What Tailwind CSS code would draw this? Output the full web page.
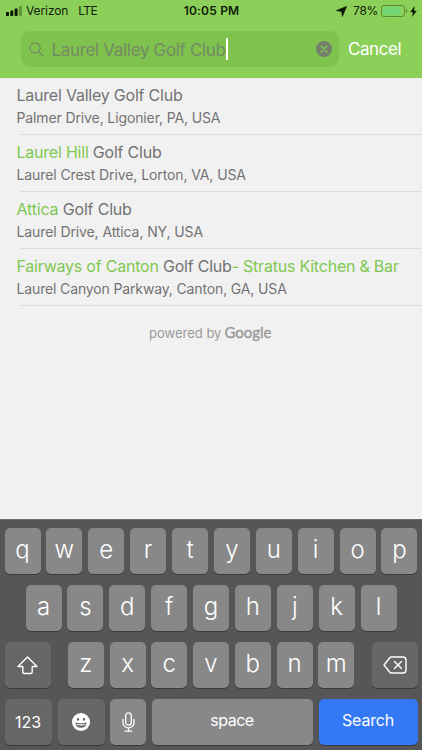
<!DOCTYPE html>
<html lang="en">
<head>
<meta charset="utf-8">
<title>Course search</title>
<script src="https://cdn.jsdelivr.net/npm/@tailwindcss/browser@4"></script>
</head>
<body class="w-[422px] h-[750px] overflow-hidden bg-[#f1f1f1] font-['Inter',sans-serif] flex flex-col whitespace-nowrap">
<header class="h-[78px] shrink-0 bg-[#8ccf59]">
  <div class="h-[22px] grid grid-cols-[1fr_auto_1fr] items-center text-[12px] leading-[22px] text-[#10200a] pl-[6px] pr-[5px]">
    <div class="flex items-center">
      <svg class="w-[17px] h-[10px] mr-[3px]" viewBox="0 0 17 10"><rect x="0" y="6" width="3" height="4" rx=".8" fill="#0b1605"/><rect x="4.3" y="4.6" width="3" height="5.4" rx=".8" fill="#0b1605"/><rect x="8.6" y="2.6" width="3" height="7.4" rx=".8" fill="#0b1605"/><rect x="12.9" y="0" width="3" height="10" rx=".8" fill="#5f9238"/></svg>
      <span class="tracking-[-0.1px]">Verizon</span><span class="ml-[10px] tracking-[-0.6px]">LTE</span>
    </div>
    <div class="font-semibold tracking-[0.2px]">10:05 PM</div>
    <div class="flex items-center justify-end">
      <svg class="w-[11px] h-[11px] mr-[6px]" viewBox="0 0 10 10"><path d="M9.700.3 5.800 9.600 5 5 .3 4.200Z" fill="#0b1605" stroke="#0b1605" stroke-width=".5" stroke-linejoin="round"/></svg>
      <span class="tracking-[-0.3px] mr-[3px]">78%</span>
      <svg class="w-[27px] h-[12px] mr-[2px]" viewBox="0 0 27 12"><rect x=".5" y=".5" width="23" height="11" rx="2.6" fill="none" stroke="#5b8a3a"/><rect x="2" y="2" width="18" height="8" rx="1.2" fill="#72d877"/><path d="M25 4v4q1.4-.6 1.4-2T25 4Z" fill="#5b8a3a"/></svg>
      <svg class="w-[7px] h-[11px]" viewBox="0 0 7 11"><path d="M4.6 0 .2 6.2h2.7L2.2 11l4.6-6.3H4Z" fill="#0b1605"/></svg>
    </div>
  </div>
  <div class="flex items-center pl-[21px] pt-[9px]">
    <div class="w-[318px] h-[36px] rounded-[9px] bg-[#7fc24e] flex items-center pl-[8px] pr-[7px] text-[#748a64]">
      <svg class="w-[15px] h-[15px] mr-[7.5px]" viewBox="0 0 15 15" fill="none" stroke="#728b60" stroke-width="1.3" stroke-linecap="round"><circle cx="6" cy="6" r="5.1"/><path d="m9.8 9.8 4.4 4.3"/></svg>
      <span class="text-[17px] leading-[24px] tracking-[-0.33px] pt-px">Laurel Valley Golf Club</span>
      <span class="w-[2px] h-[22px] bg-white"></span>
      <svg class="w-[16px] h-[16px] ml-auto" viewBox="0 0 16 16"><circle cx="8" cy="8" r="8" fill="#72806a"/><path d="m5 5 6 6m0-6-6 6" stroke="#82c751" stroke-width="1.4" stroke-linecap="round"/></svg>
    </div>
    <span class="ml-[9px] pt-[2px] text-[17px] tracking-[-0.45px] text-white">Cancel</span>
  </div>
</header>
<main class="h-[441px] shrink-0 text-[#737373]">
  <div class="h-[57px] pl-[16.5px] relative"><div class="pt-[6px] text-[16px] leading-[22px] tracking-[-0.22px]">Laurel Valley Golf Club</div><div class="pt-[2px] text-[14px] leading-[20px] tracking-[-0.12px]">Palmer Drive, Ligonier, PA, USA</div><i class="absolute left-[20px] right-0 bottom-0 h-px bg-[#dcdcdc]"></i></div>
  <div class="h-[57px] pl-[16.5px] relative"><div class="pt-[6px] text-[16px] leading-[22px] tracking-[-0.22px]"><span class="text-[#7fc850]">Laurel Hill</span> Golf Club</div><div class="pt-[2px] text-[14px] leading-[20px] tracking-[-0.1px]">Laurel Crest Drive, Lorton, VA, USA</div><i class="absolute left-[20px] right-0 bottom-0 h-px bg-[#dcdcdc]"></i></div>
  <div class="h-[57px] pl-[16.5px] relative"><div class="pt-[6px] text-[16px] leading-[22px] tracking-[-0.18px]"><span class="text-[#7fc850]">Attica</span> Golf Club</div><div class="pt-[2px] text-[14px] leading-[20px] tracking-[-0.1px]">Laurel Drive, Attica, NY, USA</div><i class="absolute left-[20px] right-0 bottom-0 h-px bg-[#dcdcdc]"></i></div>
  <div class="h-[57px] pl-[16.5px] relative"><div class="pt-[6px] text-[16px] leading-[22px] tracking-[-0.22px]"><span class="text-[#7fc850]">Fairways of Canton</span> Golf Club<span class="text-[#7fc850]">- Stratus Kitchen &amp; Bar</span></div><div class="pt-[2px] text-[14px] leading-[20px] tracking-[-0.14px]">Laurel Canyon Parkway, Canton, GA, USA</div><i class="absolute left-[20px] right-0 bottom-0 h-px bg-[#dcdcdc]"></i></div>
  <div class="flex items-baseline pl-[149px] pt-[16px] text-[13px] leading-[20px] text-[#9a9a9a]"><span>powered by</span><span class="ml-[3px] font-['Lato',sans-serif] text-[15px] [-webkit-text-stroke:0.4px_#9a9a9a]">Google</span></div>
</main>
<section class="h-[231px] shrink-0 bg-[#565656] border-t border-[#6a6a6a] pt-[8px] pl-[4.5px] pr-[4.5px] flex flex-col gap-[11.5px] text-white [&_b]:font-light [&_b]:text-[24px] [&_b]:leading-[43px] [&_b]:w-[36px] [&_b]:h-[45.5px] [&_b]:text-center [&_b]:rounded-[5px] [&_b]:bg-[#888] [&_b]:shadow-[0_1px_0_#3a3a3a]">
  <div class="flex justify-between"><b>q</b><b>w</b><b>e</b><b>r</b><b>t</b><b>y</b><b>u</b><b>i</b><b>o</b><b>p</b></div>
  <div class="flex justify-between px-[21px]"><b>a</b><b>s</b><b>d</b><b>f</b><b>g</b><b>h</b><b>j</b><b>k</b><b>l</b></div>
  <div class="flex justify-between">
    <div class="w-[46px] h-[45.5px] rounded-[5px] bg-[#676767] shadow-[0_1px_0_#3a3a3a] flex items-center justify-center pt-[2px]"><svg class="w-[21px] h-[19px]" viewBox="0 0 21 19" fill="none" stroke="#fff" stroke-width="1.4" stroke-linejoin="round"><path d="M10.5 1 20 10.5h-4.8V16q0 1.5-1.5 1.5H7.3Q5.8 17.5 5.8 16v-5.5H1Z"/></svg></div>
    <div class="w-[286.5px] flex justify-between"><b>z</b><b>x</b><b>c</b><b>v</b><b>b</b><b>n</b><b>m</b></div>
    <div class="w-[46px] h-[45.5px] rounded-[5px] bg-[#676767] shadow-[0_1px_0_#3a3a3a] flex items-center justify-center pt-px"><svg class="w-[24px] h-[18px]" viewBox="0 0 24 18" fill="none" stroke="#fff" stroke-width="1.4" stroke-linejoin="round" stroke-linecap="round"><path d="M8.5 1H20q3 0 3 3v10q0 3-3 3H8.5q-1 0-1.7-.7L1 9l5.8-7.3Q7.5 1 8.5 1ZM11.500 5.500l7 7m0-7-7 7"/></svg></div>
  </div>
  <div class="flex text-[16px] leading-[43px] text-center [&>div]:h-[45.5px] [&>div]:rounded-[5px] [&>div]:shadow-[0_1px_0_#3a3a3a]">
    <div class="w-[47px] bg-[#676767] leading-[46px]">123</div>
    <div class="w-[47px] ml-[6px] bg-[#676767] flex items-center justify-center"><svg class="w-[18px] h-[18px]" viewBox="0 0 18 18"><circle cx="9" cy="9" r="9" fill="#fff"/><ellipse cx="6" cy="6.2" rx="1.1" ry="1.5" fill="#666"/><ellipse cx="12" cy="6.2" rx="1.1" ry="1.5" fill="#666"/><path d="M3.3 9.5Q9 11 14.7 9.500 14 14.800 9 14.800T3.300 9.500Z" fill="#666"/><path d="M4.500 10.800q4.500 1 9 0l-.6 1.200q-3.900.8-7.800 0Z" fill="#fff"/></svg></div>
    <div class="w-[36px] ml-[5.5px] bg-[#888] flex items-center justify-center pt-px"><svg class="w-[13px] h-[20px]" viewBox="0 0 13 20" fill="none" stroke="#fff" stroke-width="1.3" stroke-linecap="round"><rect x="3.7" y=".8" width="5.6" height="12.4" rx="2.8"/><path d="M1 7.500v3.200a5.500 5.200 0 0 0 11 0V7.500M6.500 16v3M3.200 19.200h6.600"/></svg></div>
    <div class="w-[161px] ml-[5.5px] bg-[#888] tracking-[-0.5px]">space</div>
    <div class="flex-1 ml-[6px] bg-[#3478f6] tracking-[-0.2px]">Search</div>
  </div>
</section>
</body>
</html>
